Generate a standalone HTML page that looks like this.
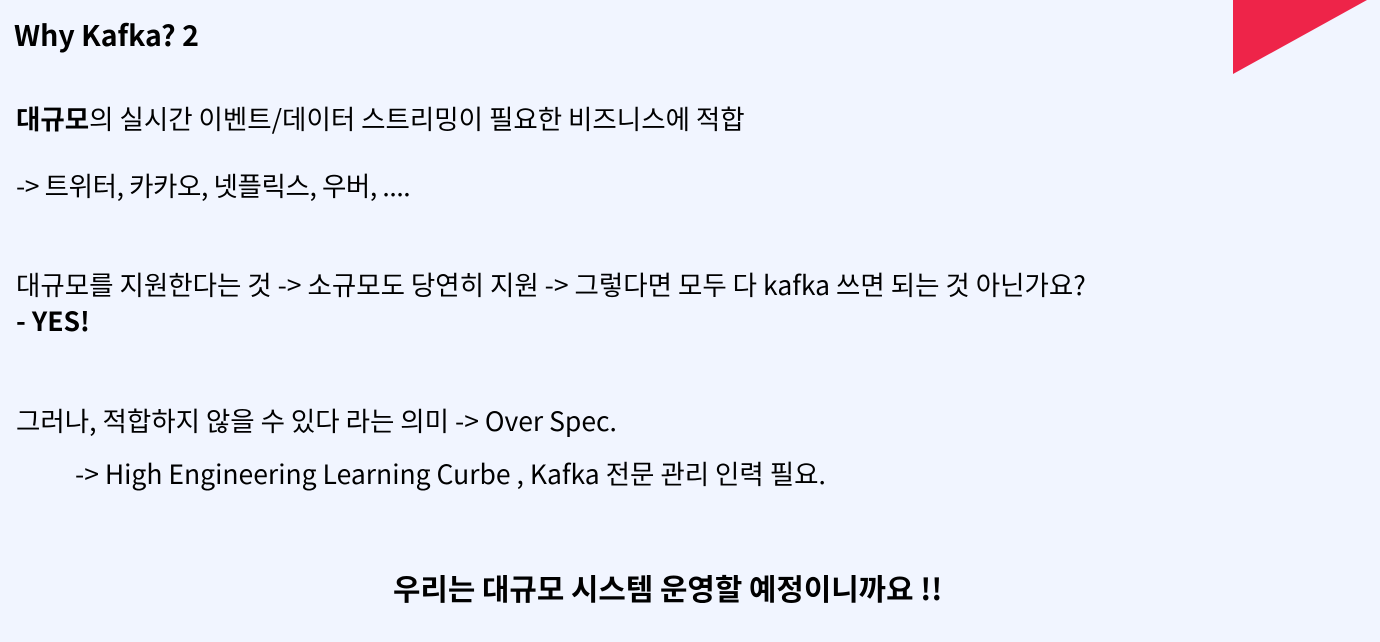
<!DOCTYPE html>
<html><head><meta charset="utf-8"><style>
html,body{margin:0;padding:0;width:1380px;height:642px;overflow:hidden;background:#f1f5ff;}
body{position:relative;font-family:"Liberation Sans","Noto Sans CJK KR",sans-serif;color:#000;}
.t{position:absolute;white-space:nowrap;font-family:"Noto Sans CJK KR","Liberation Sans",sans-serif;font-size:26.5px;line-height:30px;}
b{font-weight:700;}
</style></head><body>
<svg style="position:absolute;left:0;top:0" width="1380" height="642"><polygon points="1233,0 1367,0 1233,74" fill="#ee2449"/></svg>
<div class="t" style="left:14px;top:20px;font-size:28.5px;font-weight:700;">Why Kafka? 2</div>
<div class="t" style="left:16px;top:103px;"><b>대규모</b>의 실시간 이벤트/데이터 스트리밍이 필요한 비즈니스에 적합</div>
<div class="t" style="left:16px;top:170px;letter-spacing:-0.4px;">-&gt; 트위터, 카카오, 넷플릭스, 우버, ....</div>
<div class="t" style="left:16px;top:269px;">대규모를 지원한다는 것 -&gt; 소규모도 당연히 지원 -&gt; 그렇다면 모두 다 kafka 쓰면 되는 것 아닌가요?</div>
<div class="t" style="left:16px;top:305px;font-weight:700;">- YES!</div>
<div class="t" style="left:16px;top:405px;">그러나, 적합하지 않을 수 있다 라는 의미 -&gt; Over Spec.</div>
<div class="t" style="left:75px;top:458px;">-&gt; High Engineering Learning Curbe , Kafka 전문 관리 인력 필요.</div>
<div class="t" style="left:393px;top:572px;font-size:29.8px;font-weight:700;">우리는 대규모 시스템 운영할 예정이니까요 !!</div>
</body></html>
